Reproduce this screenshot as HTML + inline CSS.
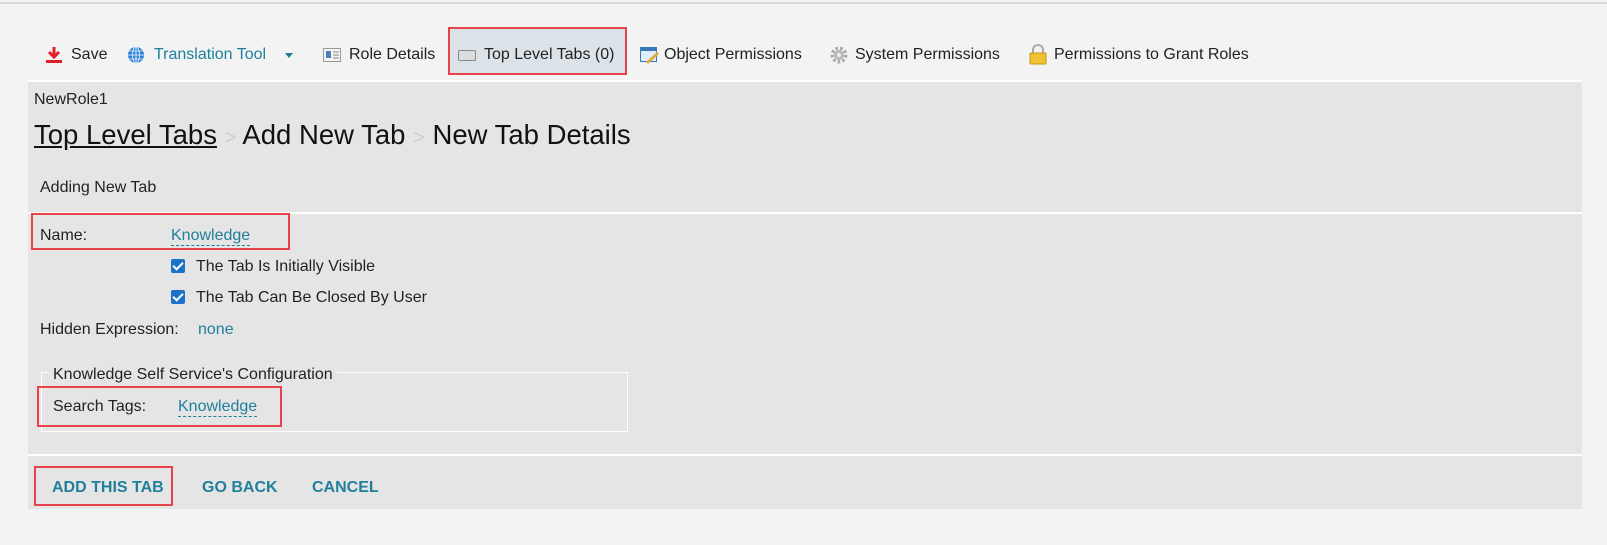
<!DOCTYPE html>
<html><head><meta charset="utf-8"><style>
*{box-sizing:border-box;margin:0;padding:0}
body{width:1607px;height:545px;background:#f3f3f3;font-family:"Liberation Sans",sans-serif;font-size:16px;color:#222;position:relative;overflow:hidden}
.a{position:absolute;white-space:nowrap;line-height:20px}
.teal{color:#1f7f9c}
.red{position:absolute;border:2px solid #e8424a}
.panel{position:absolute;left:28px;top:80px;width:1554px;height:429px;background:#e5e5e5;border-top:2px solid #fff}
.sep{position:absolute;left:28px;width:1554px;height:2px;background:#fff}
.dash{border-bottom:1px dashed #1f7f9c;padding-bottom:1px}
.cb{position:absolute;width:14px;height:14px;background:#1a73c8;border-radius:2px}
.cb:after{content:"";position:absolute;left:4px;top:1px;width:4px;height:8px;border:solid #fff;border-width:0 2px 2px 0;transform:rotate(45deg)}
.btn{font-weight:bold;color:#1f7f9c;font-size:16px}
</style></head><body>
<div class="a" style="left:0;top:2px;width:1607px;height:2px;background:#d8d8d8"></div>
<div class="a" style="left:449px;top:28px;width:177px;height:46px;background:#dce3e8"></div>
<div class="red" style="left:448px;top:27px;width:179px;height:48px"></div>
<svg class="a" style="left:45px;top:46px" width="18" height="18" viewBox="0 0 18 18"><path d="M9 1v10M4 6l5 5 5-5" stroke="#e21e26" stroke-width="3" fill="none"/><rect x="1" y="14" width="16" height="3" fill="#e21e26"/></svg>
<div class="a" style="left:71px;top:45px">Save</div>
<svg class="a" style="left:127px;top:46px" width="18" height="18" viewBox="0 0 18 18"><circle cx="9" cy="9" r="8" fill="#2a7fd0"/><g stroke="#cfe6ff" stroke-width="1" fill="none"><ellipse cx="9" cy="9" rx="3.5" ry="8"/><path d="M1 9h16M2.5 5h13M2.5 13h13M9 1v16"/></g></svg>
<div class="a teal" style="left:154px;top:45px">Translation Tool</div>
<div class="a" style="left:285px;top:53px;border:4px solid transparent;border-top:5px solid #1f7f9c;width:0;height:0;line-height:0"></div>
<svg class="a" style="left:323px;top:48px" width="18" height="14"><rect x="0.5" y="0.5" width="17" height="13" fill="#f4f4f4" stroke="#999"/><rect x="3" y="3" width="5" height="7" fill="#4a7fb8"/><path d="M10 4h6M10 7h6M10 10h6" stroke="#888"/></svg>
<div class="a" style="left:349px;top:45px">Role Details</div>
<svg class="a" style="left:458px;top:50px" width="18" height="12"><rect x="0.5" y="0.5" width="17" height="10" rx="1" fill="#ddd" stroke="#888"/></svg>
<div class="a" style="left:484px;top:45px">Top Level Tabs (0)</div>
<svg class="a" style="left:640px;top:46px" width="20" height="18"><rect x="0.5" y="1.5" width="16" height="14" fill="#dfeefa" stroke="#3a78b8"/><rect x="1" y="2" width="15" height="3" fill="#3a78b8"/><path d="M6 16l11-10 2 2-11 10z" fill="#e3a93a"/></svg>
<div class="a" style="left:664px;top:45px">Object Permissions</div>
<svg class="a" style="left:830px;top:46px" width="18" height="18" viewBox="0 0 18 18"><circle cx="9" cy="9" r="6.5" fill="none" stroke="#aaa" stroke-width="4" stroke-dasharray="2.5 2"/><circle cx="9" cy="9" r="5" fill="#bbb"/><circle cx="9" cy="9" r="2" fill="#eee"/></svg>
<div class="a" style="left:855px;top:45px">System Permissions</div>
<svg class="a" style="left:1029px;top:44px" width="18" height="21"><path d="M4 10V6a5 5 0 0 1 10 0v4" stroke="#aaa" stroke-width="2" fill="none"/><rect x="1" y="9" width="16" height="11" rx="1" fill="#f1c232" stroke="#c9961a"/></svg>
<div class="a" style="left:1054px;top:45px">Permissions to Grant Roles</div>

<div class="panel"></div>
<div class="sep" style="top:212px"></div>
<div class="sep" style="top:454px"></div>
<div class="a" style="left:34px;top:90px">NewRole1</div>
<div class="a" style="left:34px;top:120px;font-size:27.5px;line-height:30px;color:#111"><span style="text-decoration:underline">Top Level Tabs</span> <span style="color:#ccc;font-size:20px">&gt;</span> Add New Tab <span style="color:#ccc;font-size:20px">&gt;</span> New Tab Details</div>
<div class="a" style="left:40px;top:178px">Adding New Tab</div>

<div class="red" style="left:31px;top:213px;width:259px;height:37px"></div>
<div class="a" style="left:40px;top:226px">Name:</div>
<div class="a teal" style="left:171px;top:226px"><span class="dash">Knowledge</span></div>
<div class="cb" style="left:171px;top:259px"></div>
<div class="a" style="left:196px;top:257px">The Tab Is Initially Visible</div>
<div class="cb" style="left:171px;top:290px"></div>
<div class="a" style="left:196px;top:288px">The Tab Can Be Closed By User</div>
<div class="a" style="left:40px;top:320px">Hidden Expression:</div>
<div class="a teal" style="left:198px;top:320px">none</div>

<div class="a" style="left:41px;top:372px;width:587px;height:60px;border:1px solid #fff"></div>
<div class="a" style="left:49px;top:365px;background:#e5e5e5;padding:0 4px">Knowledge Self Service's Configuration</div>
<div class="red" style="left:37px;top:386px;width:245px;height:41px"></div>
<div class="a" style="left:53px;top:397px">Search Tags:</div>
<div class="a teal" style="left:178px;top:397px"><span class="dash">Knowledge</span></div>

<div class="red" style="left:34px;top:466px;width:139px;height:40px"></div>
<div class="a btn" style="left:52px;top:478px">ADD THIS TAB</div>
<div class="a btn" style="left:202px;top:478px">GO BACK</div>
<div class="a btn" style="left:312px;top:478px">CANCEL</div>
</body></html>
